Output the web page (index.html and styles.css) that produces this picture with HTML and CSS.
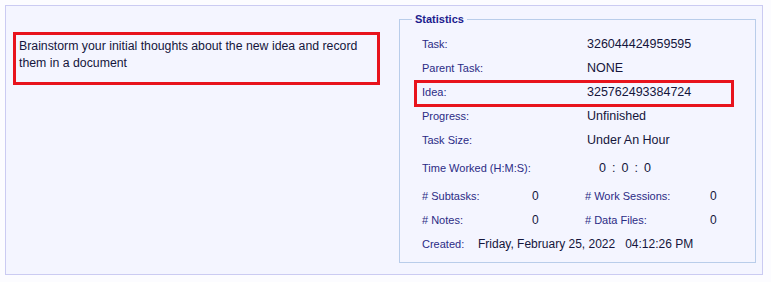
FILE: index.html
```html
<!DOCTYPE html>
<html lang="en">
<head>
    <meta charset="UTF-8">
    <title>Task Details</title>
    <link rel="stylesheet" href="styles.css">
</head>
<body>
    <div class="panel">
        <div class="description">
            <div class="description-box">
                Brainstorm your initial thoughts about the new idea and record them in a document
            </div>
        </div>

        <fieldset class="stats">
            <legend>Statistics</legend>
            <div class="stats-body">
                <div class="row">
                    <span class="label">Task:</span>
                    <span class="value">326044424959595</span>
                </div>
                <div class="row">
                    <span class="label">Parent Task:</span>
                    <span class="value">NONE</span>
                </div>
                <div class="row row-marked">
                    <span class="label">Idea:</span>
                    <span class="value">325762493384724</span>
                </div>
                <div class="row">
                    <span class="label">Progress:</span>
                    <span class="value">Unfinished</span>
                </div>
                <div class="row">
                    <span class="label">Task Size:</span>
                    <span class="value">Under An Hour</span>
                </div>
                <div class="row row-tall">
                    <span class="label">Time Worked (H:M:S):</span>
                    <span class="value time">
                        <span>0</span><span>:</span><span>0</span><span>:</span><span>0</span>
                    </span>
                </div>
                <div class="row row-counts">
                    <span class="label">#&nbsp;Subtasks:</span>
                    <span class="count">0</span>
                    <span class="label"># Work Sessions:</span>
                    <span class="count">0</span>
                </div>
                <div class="row row-counts">
                    <span class="label"># Notes:</span>
                    <span class="count">0</span>
                    <span class="label"># Data Files:</span>
                    <span class="count">0</span>
                </div>
                <div class="row row-created">
                    <span class="label">Created:</span>
                    <span class="created">Friday, February 25, 2022</span>
                    <span class="created created-time">04:12:26 PM</span>
                </div>
            </div>
        </fieldset>
    </div>
</body>
</html>
```

FILE: styles.css
```css
:root {
    --page: #fcfcff;
    --panel: #f4f5ff;
    --panel-border: #cbcbf2;
    --field-border: #b9cdea;
    --label: #2b2b85;
    --value: #15153c;
    --legend: #1c1c8e;
    --mark: #e8131d;
}

*,
*::before,
*::after {
    margin: 0;
    padding: 0;
    box-sizing: border-box;
}

body {
    font-family: "Liberation Sans", Arial, sans-serif;
    background-color: var(--page);
    color: var(--value);
}

.panel {
    display: flex;
    justify-content: space-between;
    margin: 5px 0 0 5px;
    width: 758px;
    height: 270px;
    padding: 0 6px 0 7px;
    background: var(--panel);
    border: 1px solid var(--panel-border);
}

.description {
    padding-top: 26px;
}

.description-box {
    width: 367px;
    height: 53px;
    padding: 3px 4px 0 3px;
    border: 3px solid var(--mark);
    font-size: 12.3px;
    line-height: 17px;
    color: var(--value);
}

/* statistics box */
.stats {
    width: 357px;
    height: 250px;
    margin-top: 7px;
    border: 1px solid var(--field-border);
    padding: 0;
}

.stats legend {
    margin-left: 12px;
    padding: 0 3px;
    font-size: 11px;
    font-weight: 700;
    color: var(--legend);
    line-height: 13px;
}

.stats-body {
    padding: 6px 0 0 22px;
}

.row {
    position: relative;
    display: grid;
    grid-template-columns: 165px 1fr;
    align-items: center;
    height: 24px;
}

.row-marked::after {
    content: "";
    position: absolute;
    left: -8px;
    top: 0;
    width: 320px;
    height: 27px;
    border: 3px solid var(--mark);
}

.row-tall {
    height: 32px;
}

.row-counts {
    grid-template-columns: 110px 53px 125px 1fr;
}

.row-created {
    grid-template-columns: 56px auto 1fr;
}

.label {
    font-size: 11px;
    color: var(--label);
}

.value {
    font-size: 12.5px;
    color: var(--value);
}

.count {
    font-size: 12px;
    color: var(--value);
}

.created {
    font-size: 12px;
    color: var(--value);
}

.created-time {
    margin-left: 10px;
}

.time {
    display: flex;
    gap: 6px;
    padding-left: 12px;
}
```
